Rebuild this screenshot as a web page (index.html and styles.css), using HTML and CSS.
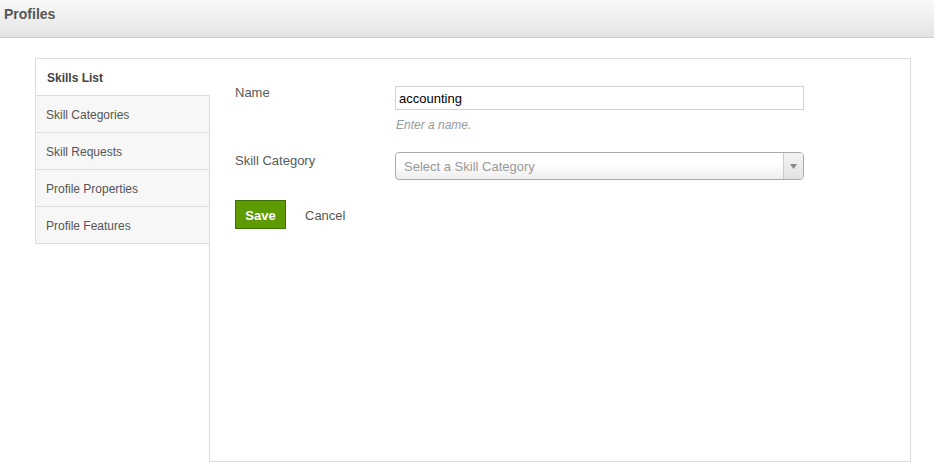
FILE: index.html
```html
<!DOCTYPE html>
<html>
<head>
<meta charset="utf-8">
<title>Profiles</title>
<link rel="stylesheet" href="styles.css">
</head>
<body>
<header class="topbar">
  <h1 class="title">Profiles</h1>
</header>
<div class="frame">
  <nav class="tabs">
    <div class="tab tab-active">Skills List</div>
    <div class="tab">Skill Categories</div>
    <div class="tab">Skill Requests</div>
    <div class="tab">Profile Properties</div>
    <div class="tab">Profile Features</div>
    <div class="tab-filler"></div>
  </nav>
  <main class="panel">
    <div class="row row-name">
      <label class="label">Name</label>
      <div class="field">
        <input class="text-input" type="text" value="accounting">
        <div class="help">Enter a name.</div>
      </div>
    </div>
    <div class="row row-cat">
      <label class="label">Skill Category</label>
      <div class="field">
        <div class="select">
          <span class="select-text">Select a Skill Category</span>
          <span class="select-arrow"><svg width="7" height="5" viewBox="0 0 7 5"><path d="M0 0H7L3.5 5Z" fill="#888"/></svg></span>
        </div>
      </div>
    </div>
    <div class="actions">
      <button class="btn-save">Save</button>
      <a class="cancel">Cancel</a>
    </div>
  </main>
</div>
</body>
</html>
```
FILE: styles.css
```css
html, body {
  margin: 0;
  padding: 0;
  background: #fff;
  font-family: "Liberation Sans", Arial, sans-serif;
}
.topbar {
  height: 37px;
  border-bottom: 1px solid #cdcdcd;
  background: linear-gradient(#f9f9f9, #e4e4e4);
}
.title {
  margin: 0;
  padding-left: 4px;
  font-size: 14px;
  line-height: 28px;
  font-weight: bold;
  color: #555;
}
.frame {
  display: flex;
  margin: 20px 0 0 35px;
  width: 876px;
  height: 404px;
}
.tabs {
  display: flex;
  flex-direction: column;
  width: 175px;
  flex: none;
}
.tab {
  height: 34px;
  padding-top: 2px;
  line-height: 34px;
  padding-left: 10px;
  font-size: 12px;
  color: #555;
  background: #f7f7f7;
  border-left: 1px solid #ddd;
  border-right: 1px solid #ddd;
  border-bottom: 1px solid #ddd;
}
.tab-active {
  background: #fff;
  border-top: 1px solid #ddd;
  border-right: none;
  padding-right: 1px;
  padding-left: 11px;
  font-weight: bold;
  color: #444;
}
.tab-filler {
  flex: 1;
  border-right: 1px solid #ddd;
}
.panel {
  flex: 1;
  border: 1px solid #ddd;
  border-left: none;
  padding: 25px 0 0 25px;
}
.row {
  display: flex;
  align-items: flex-start;
}
.label {
  width: 160px;
  flex: none;
  padding-top: 1px;
  font-size: 13px;
  line-height: 16px;
  color: #5a5a5a;
}
.field {
  width: 409px;
}
.text-input {
  display: block;
  box-sizing: border-box;
  width: 409px;
  height: 24px;
  margin: 2px 0 0 0;
  padding: 1px 3px 0;
  border: 1px solid #d2d2d2;
  font-family: "Liberation Sans", Arial, sans-serif;
  font-size: 13px;
  color: #000;
  outline: none;
}
.help {
  margin-top: 7px;
  padding-left: 1px;
  font-size: 12px;
  line-height: 16px;
  font-style: italic;
  color: #999;
}
.row-cat {
  margin-top: 19px;
}
.select {
  box-sizing: border-box;
  display: flex;
  height: 28px;
  border: 1px solid #aaa;
  border-radius: 4px;
  background: linear-gradient(#fff 40%, #eee);
  overflow: hidden;
}
.select-text {
  flex: 1;
  padding: 1px 0 0 8px;
  font-size: 13px;
  line-height: 26px;
  color: #999;
}
.select-arrow {
  width: 19px;
  display: flex;
  align-items: center;
  justify-content: center;
  padding-top: 1px;
  border-left: 1px solid #ccc;
  background: linear-gradient(#f4f4f4, #e2e2e2);
}
.actions {
  display: flex;
  align-items: center;
  margin-top: 20px;
}
.btn-save {
  box-sizing: border-box;
  width: 51px;
  height: 29px;
  padding: 2px 0 0;
  border: 1px solid #3f6e05;
  background: #5e9a03;
  color: #fff;
  font-family: "Liberation Sans", Arial, sans-serif;
  font-size: 13px;
  font-weight: bold;
}
.cancel {
  margin: 2px 0 0 19px;
  font-size: 13px;
  color: #555;
}
```
